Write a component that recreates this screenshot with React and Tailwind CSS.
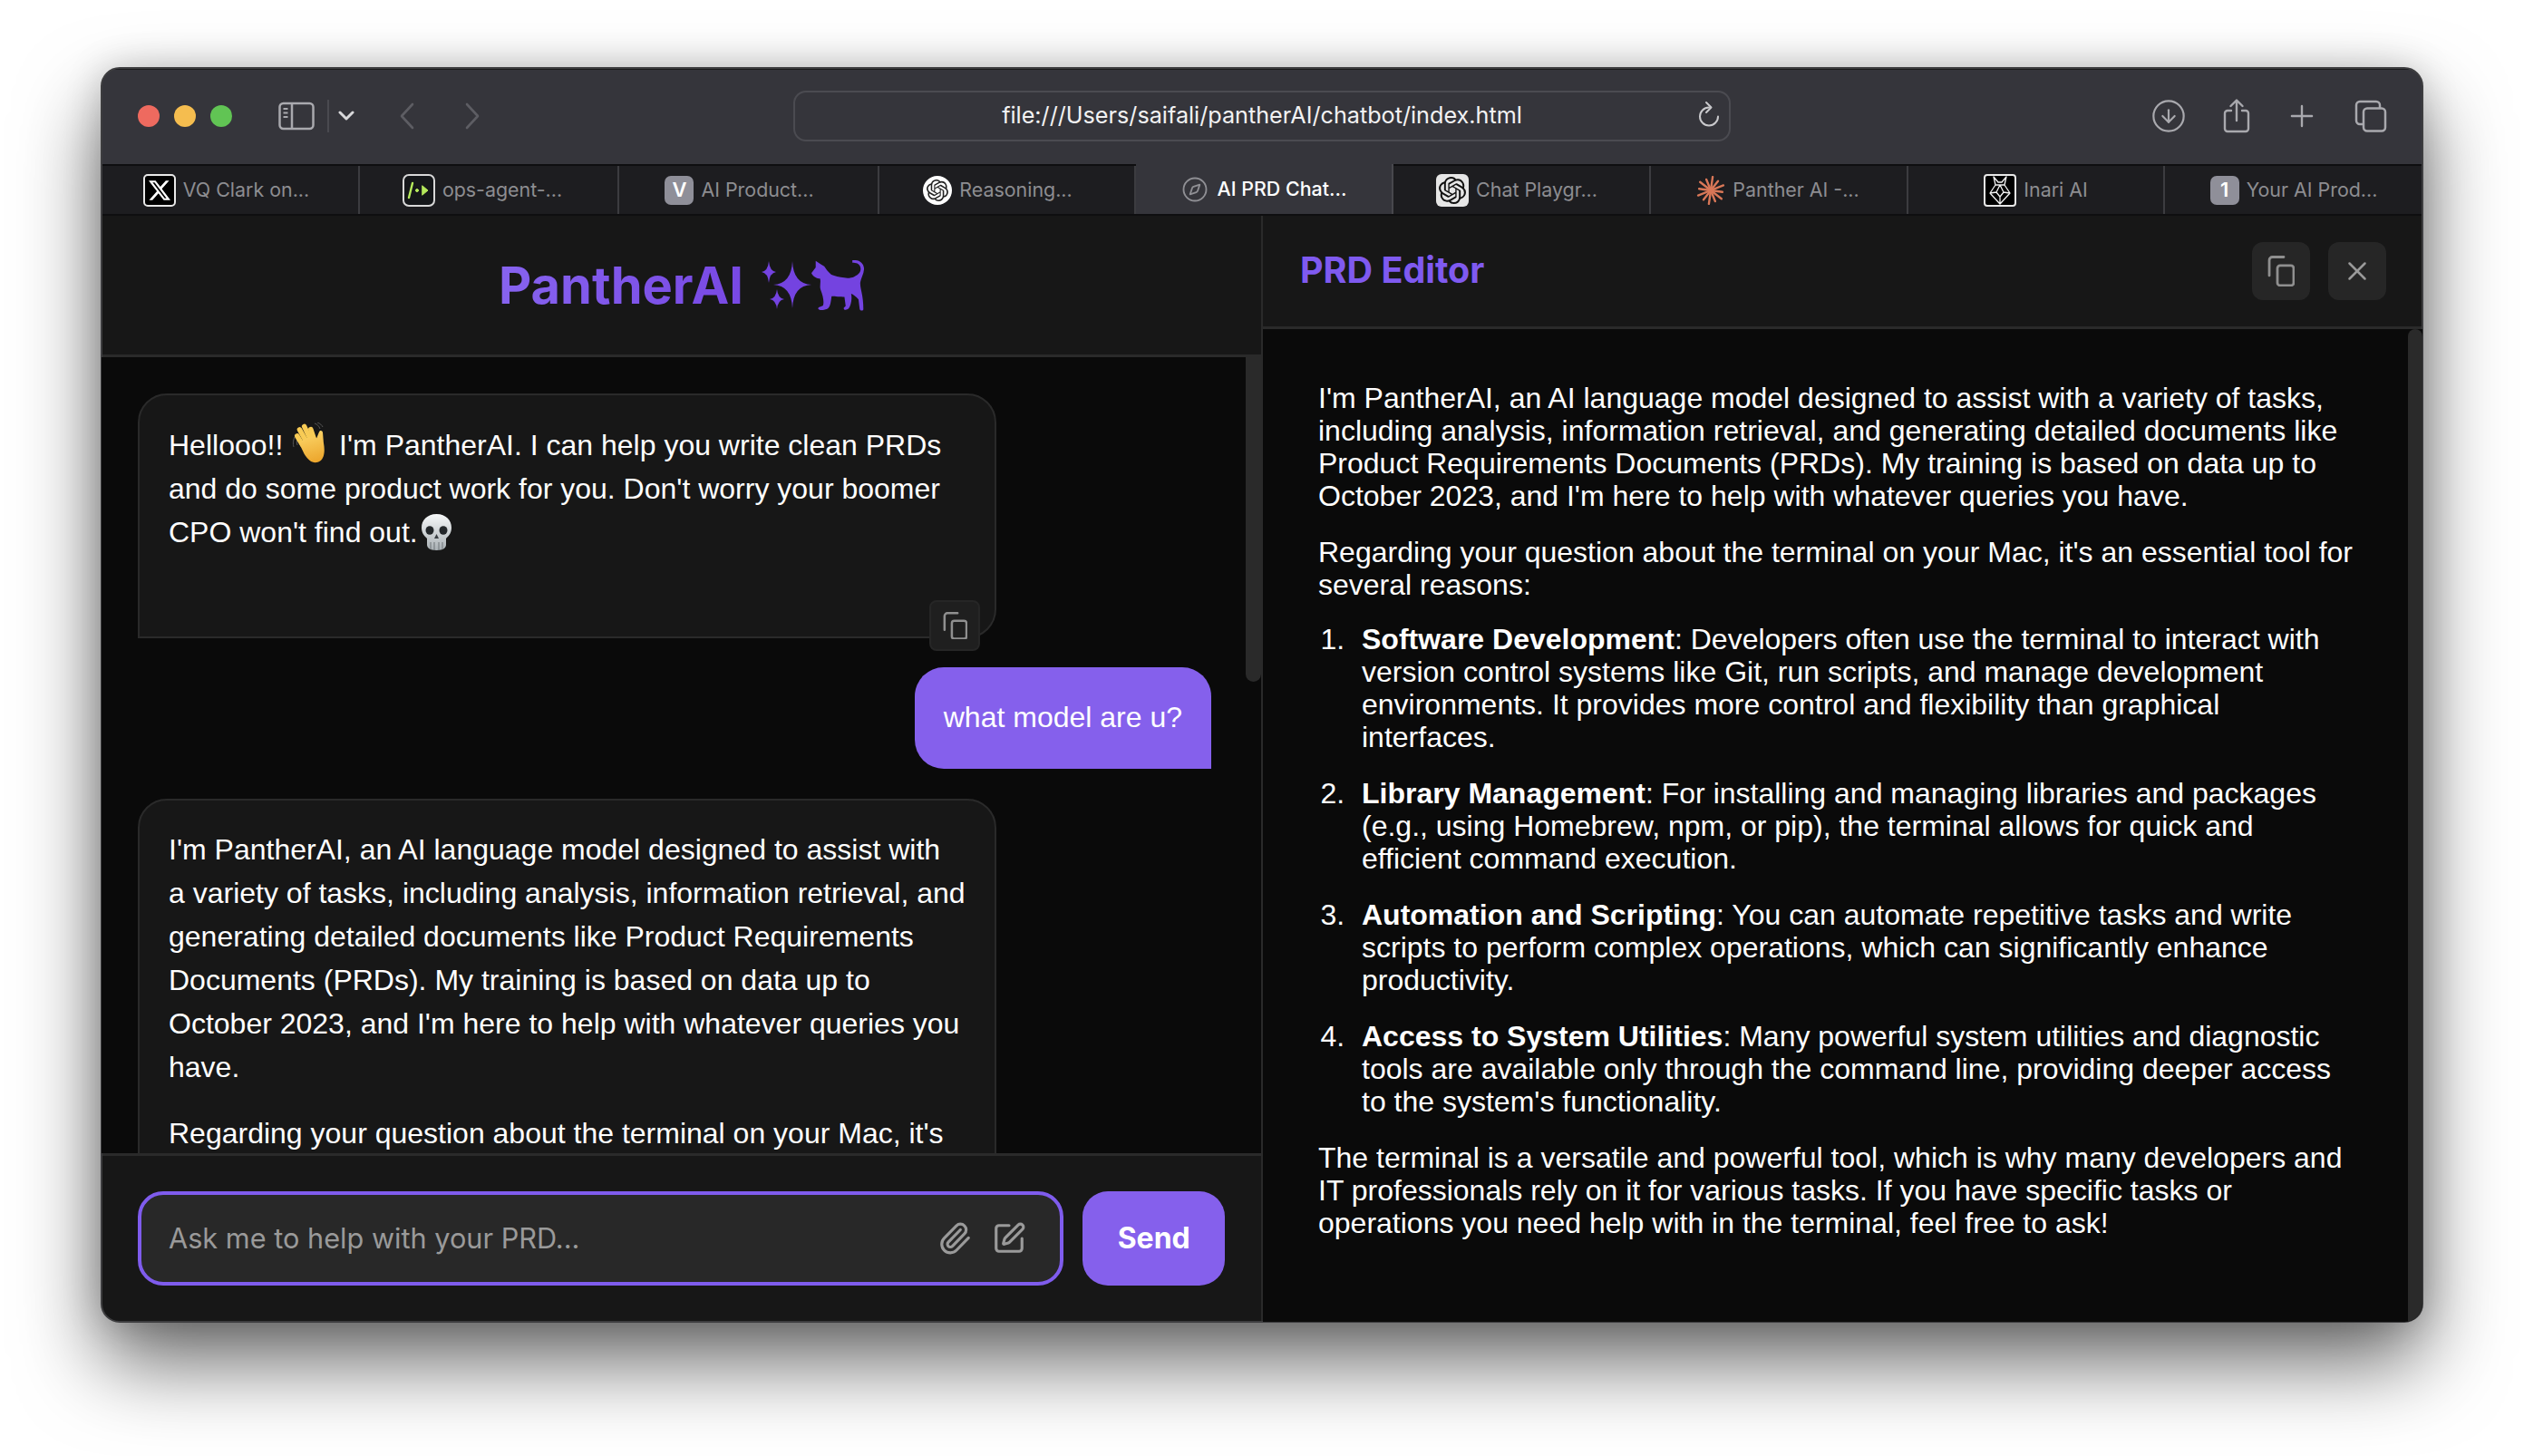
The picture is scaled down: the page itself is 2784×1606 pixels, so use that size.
import { Compass, Paperclip, SquarePen, X, CircleArrowDown, Plus } from 'lucide-react'
import { SiOpenai, SiX } from 'react-icons/si'

const sans = "font-['Liberation_Sans',Arial,sans-serif]"

function Star({ cx, cy, h, v }) {
  return <path d={`M${cx} ${cy - v}Q${cx + 1} ${cy - 1} ${cx + h} ${cy}Q${cx + 1} ${cy + 1} ${cx} ${cy + v}Q${cx - 1} ${cy + 1} ${cx - h} ${cy}Q${cx - 1} ${cy - 1} ${cx} ${cy - v}Z`} />
}

function Sparkles() {
  return (
    <svg width="55" height="54" viewBox="0 0 55 54" fill="#7443e0">
      <Star cx={34} cy={26} h={21} v={26} />
      <Star cx={8} cy={12} h={8} v={12} />
      <Star cx={17} cy={42} h={8} v={11} />
    </svg>
  )
}

function Cat() {
  return (
    <svg width="58" height="56" viewBox="0 0 172 166" fill="#7443e0">
      <path d="M0 42 L14 24 L14 2 L32 14 L42 20 C52 34 60 46 72 50 C98 58 124 62 140 54 C156 46 164 36 160 22 C156 10 146 8 134 8 L134 0 C156 -2 170 8 172 26 C173 44 162 58 160 72 C158 92 170 112 170 160 C170 166 160 166 158 160 L154 128 C146 120 136 112 130 110 C134 130 128 150 122 158 C116 164 104 164 106 156 L112 150 L108 120 C96 118 76 120 66 118 C64 134 62 152 54 158 C44 164 22 166 22 158 C22 152 32 152 38 148 C42 136 38 116 30 96 C26 84 32 70 28 60 C18 60 6 54 0 42Z" />
    </svg>
  )
}

function WaveEmoji() {
  return (
    <svg width="42" height="46" viewBox="0 0 42 46" className="inline-block align-[-10px] mx-[1px]">
      <defs><linearGradient id="wv" x1="0" y1="0" x2="0" y2="1"><stop offset="0" stopColor="#fad163" /><stop offset="1" stopColor="#eca52b" /></linearGradient></defs>
      <g stroke="#666" strokeWidth="1" fill="none" opacity="0.8"><path d="M3 16c-2 4-2 8-1 11M7 17c-2 3-2 5-1 8" /><path d="M25 1c3 1 5 3 6 6M28 0c3 1 5 3 6 5" /></g>
      <g transform="rotate(-16 22 28)">
        <g strokeWidth="5.500" strokeLinecap="round" fill="none" stroke="#f8cb55">
          <path d="M13 22L10 11" />
          <path d="M18 20L14.500 5" />
          <path d="M23 19L20.500 3" />
          <path d="M27 20L26.500 8" />
        </g>
        <path d="M10 20C16 15 26 15 30 19L34 14C36 11 39 13 38 16L36 26C35 37 31 45 24 45C17 45 14 39 12 32Z" fill="url(#wv)" />
      </g>
    </svg>
  )
}

function SkullEmoji() {
  return (
    <svg width="37" height="40" viewBox="0 0 37 40" className="inline-block align-[-9px] ml-[2px]">
      <defs><linearGradient id="sk" x1="0" y1="0" x2="0" y2="1"><stop offset="0" stopColor="#f6f8f9" /><stop offset="1" stopColor="#a9b0b4" /></linearGradient></defs>
      <path d="M18.5 0C8 0 2 7 2 15c0 6 3 9 6 12v7c0 3 3 6 10.500 6S29 37 29 34v-7c3-3 6-6 6-12C35 7 29 0 18.500 0z" fill="url(#sk)" />
      <ellipse cx="11" cy="18" rx="4.500" ry="4.800" fill="#23272a" />
      <ellipse cx="26" cy="18" rx="4.500" ry="4.800" fill="#23272a" />
      <path d="M18.500 22l-2.500 5h5z" fill="#3a3f43" />
      <path d="M12 31v8M16 31v9M21 31v9M25 31v8" stroke="#6e7478" strokeWidth="1" />
    </svg>
  )
}

function CopyIcon({ size = 30, color = '#8f8f8f' }) {
  return (
    <svg width={size} height={size * 1.13} viewBox="0 0 30 34" fill="none" stroke={color} strokeWidth="2.800" strokeLinejoin="round">
      <rect x="11" y="11" width="18" height="22" rx="3" />
      <path d="M2 22V5a3.500 3.500 0 0 1 3.500-3.500H18" strokeLinecap="round" />
    </svg>
  )
}

function SidebarIcon() {
  return (
    <svg width="40" height="32" viewBox="0 0 40 32" fill="none" stroke="#a9a9ae" strokeWidth="2.500">
      <rect x="1.500" y="2" width="37" height="28" rx="4" />
      <path d="M15 2v28" />
      <path d="M5.500 8h5M5.500 12.500h5M5.500 17h5" strokeWidth="1.800" />
    </svg>
  )
}

function ShareIcon() {
  return (
    <svg width="30" height="38" viewBox="0 0 30 38" fill="none" stroke="#a9a9ae" strokeWidth="2.400" strokeLinecap="round" strokeLinejoin="round">
      <path d="M9 13H5a3 3 0 0 0-3 3v17a3 3 0 0 0 3 3h20a3 3 0 0 0 3-3V16a3 3 0 0 0-3-3h-4" />
      <path d="M15 24V2M8.500 8L15 1.500 21.500 8" />
    </svg>
  )
}

function TabsIcon() {
  return (
    <svg width="36" height="36" viewBox="0 0 36 36" fill="none" stroke="#a9a9ae" strokeWidth="2.500" strokeLinejoin="round">
      <rect x="10" y="9.500" width="24" height="25" rx="4" />
      <path d="M10 27H6a4 4 0 0 1-4-4V6a4 4 0 0 1 4-4h18a4 4 0 0 1 4 4v3.500" />
    </svg>
  )
}

function ReloadIcon() {
  return (
    <svg width="24" height="30" viewBox="0 0 24 30" fill="none" stroke="#c9c9cc" strokeWidth="2" strokeLinecap="round" strokeLinejoin="round">
      <path d="M12 7.500a10 10 0 1 0 10 10" />
      <path d="M9 2l5.500 5.500L9 13" />
    </svg>
  )
}

function FoxIcon() {
  return (
    <svg width="26" height="32" viewBox="0 0 26 32" fill="none" stroke="#f2f2f2" strokeWidth="1.300" strokeLinejoin="round">
      <path d="M6 1l2 9h10l2-9-5 6h-4zM8 10l-6 9 11 12 11-12-6-9M2 19l7-1 4 5 4-5 7 1M13 23v8M9 18l4-8 4 8" />
    </svg>
  )
}

function OpsIcon() {
  return (
    <svg width="26" height="20" viewBox="0 0 26 20" fill="none" stroke="#b6ea5c" strokeWidth="2.400" strokeLinecap="round">
      <path d="M6 2L2 18" />
      <circle cx="11" cy="10" r="1.500" fill="#b6ea5c" strokeWidth="1" />
      <path d="M17 5l6 5-6 5z" fill="#b6ea5c" strokeWidth="1" strokeLinejoin="round" />
    </svg>
  )
}

function Starburst() {
  const spokes = [0, 30, 60, 90, 120, 150, 180, 210, 240, 270, 300, 330]
  return (
    <svg width="32" height="32" viewBox="0 0 32 32" stroke="#d97757" strokeWidth="2.400" strokeLinecap="round">
      {spokes.map(a => <line key={a} x1="16" y1="16" x2="16" y2={a % 60 === 0 ? 1 : 3} transform={`rotate(${a + 8} 16 16)`} />)}
    </svg>
  )
}

const tabs = [
  { title: 'VQ Clark on...', w: 'w-[285px] pr-[8px]', icon: <span className="w-[36px] h-[36px] rounded-[5px] bg-black border-2 border-[#e8e8e8] flex items-center justify-center"><SiX size={24} color="#fff" /></span> },
  { title: 'ops-agent-...', w: 'w-[286px] pr-[14px]', icon: <span className="w-[36px] h-[36px] rounded-[7px] bg-[#15171a] border-2 border-[#d8d8d8] flex items-center justify-center"><OpsIcon /></span> },
  { title: 'AI Product...', w: 'w-[287px] pr-[20px]', icon: <span className="w-[32px] h-[32px] rounded-[7px] bg-[#8f8f99] flex items-center justify-center text-white text-[22px] font-semibold">V</span> },
  { title: 'Reasoning...', w: 'w-[283px] pr-[20px]', icon: <span className="w-[32px] h-[32px] rounded-full bg-white flex items-center justify-center"><SiOpenai size={24} color="#222" /></span> },
  { title: 'AI PRD Chat...', w: 'w-[284px]', active: true, icon: <Compass size={30} color="#8f8f94" strokeWidth={1.500} /> },
  { title: 'Chat Playgr...', w: 'w-[284px] pr-[10px]', icon: <span className="w-[36px] h-[36px] rounded-[6px] bg-[#e6e6e6] flex items-center justify-center"><SiOpenai size={30} color="#111" /></span> },
  { title: 'Panther AI -...', w: 'w-[284px] pr-[2px]', icon: <Starburst /> },
  { title: 'Inari AI', w: 'w-[283px]', icon: <span className="w-[36px] h-[36px] rounded-[4px] bg-black border-2 border-[#e8e8e8] flex items-center justify-center"><FoxIcon /></span> },
  { title: 'Your AI Prod...', w: 'w-[284px]', icon: <span className="w-[32px] h-[32px] rounded-[7px] bg-[#8f8f99] flex items-center justify-center text-white text-[22px] font-semibold">1</span> },
]

const listItems = [
  ['Software Development', ': Developers often use the terminal to interact with version control systems like Git, run scripts, and manage development environments. It provides more control and flexibility than graphical interfaces.'],
  ['Library Management', ': For installing and managing libraries and packages (e.g., using Homebrew, npm, or pip), the terminal allows for quick and efficient command execution.'],
  ['Automation and Scripting', ': You can automate repetitive tasks and write scripts to perform complex operations, which can significantly enhance productivity.'],
  ['Access to System Utilities', ': Many powerful system utilities and diagnostic tools are available only through the command line, providing deeper access to the system\'s functionality.'],
]

export default function App() {
  return (
    <div className="w-[2784px] h-[1606px] bg-white pt-[75px] pl-[112px] overflow-hidden font-[Inter,sans-serif]">
      <div className="w-[2560px] h-[1383px] rounded-[20px] overflow-hidden flex flex-col bg-[#171717] outline-2 outline-[#3d3d3f] -outline-offset-1 shadow-[0_44px_90px_rgba(0,0,0,0.6),0_0_40px_rgba(0,0,0,0.18)]">
        {/* toolbar */}
        <div className="h-[106px] shrink-0 bg-[#35353b] border-t-2 border-[#1a1a1c] flex items-start pt-[23px] pl-[40px]">
          <div className="flex items-center h-[56px] w-full">
            <span className="w-[24px] h-[24px] rounded-full bg-[#ee6a5f]" />
            <span className="w-[24px] h-[24px] rounded-full bg-[#f5bd4f] ml-[16px]" />
            <span className="w-[24px] h-[24px] rounded-full bg-[#61c454] ml-[16px]" />
            <span className="ml-[51px]"><SidebarIcon /></span>
            <span className="ml-[14px] w-[2px] h-[36px] bg-[#4a4a50]" />
            <svg className="ml-[9px]" width="20" height="12" viewBox="0 0 20 12" fill="none" stroke="#d8d8da" strokeWidth="3" strokeLinecap="round" strokeLinejoin="round"><path d="M3 2l7 7 7-7" /></svg>
            <svg className="ml-[49px]" width="16" height="30" viewBox="0 0 16 30" fill="none" stroke="#5d5d63" strokeWidth="2.600" strokeLinecap="round" strokeLinejoin="round"><path d="M14 2L2 15l12 13" /></svg>
            <svg className="ml-[56px]" width="16" height="30" viewBox="0 0 16 30" fill="none" stroke="#5d5d63" strokeWidth="2.600" strokeLinecap="round" strokeLinejoin="round"><path d="M2 2l12 13L2 28" /></svg>
            <div className="ml-[346px] w-[1034px] h-[56px] rounded-[14px] border-2 border-[#4b4b51] relative flex items-center justify-center text-[#f2f2f3] text-[25.2px]">
              file:///Users/saifali/pantherAI/chatbot/index.html
              <span className="absolute right-[10px] top-[9px]"><ReloadIcon /></span>
            </div>
            <CircleArrowDown className="ml-[463px]" size={40} color="#a9a9ae" strokeWidth={1.300} />
            <span className="ml-[40px]"><ShareIcon /></span>
            <Plus className="ml-[38px]" size={38} color="#a9a9ae" strokeWidth={1.500} />
            <span className="ml-[39px]"><TabsIcon /></span>
          </div>
        </div>
        {/* tab strip */}
        <div className="h-[57px] shrink-0 flex bg-[#1d1d20] border-y-2 border-[#0e0e10]">
          {tabs.map((t, i) => (
            <div key={t.title} className={`${t.w} shrink-0 flex items-center justify-center gap-[8px] text-[21.4px] ${i < 8 ? 'border-r-2' : ''} ${t.active ? '-mt-[2px] bg-[#35353b] text-white font-medium gap-[10px] border-[#48484d]' : 'text-[#8d8d91] border-[#3c3c40]'}`}>
              {t.icon}
              <span>{t.title}</span>
            </div>
          ))}
        </div>
        {/* content */}
        <div className="flex-1 flex min-h-0">
          {/* chat column */}
          <div className="w-[1281px] shrink-0 flex flex-col border-r-2 border-[#2a2a2a]">
            <div className="h-[156px] shrink-0 flex items-center justify-center gap-[20px] border-b-[3px] border-[#2a2a2a]">
              <h1 className="text-[56px] font-bold bg-gradient-to-r from-[#8763ef] to-[#7848e4] bg-clip-text text-transparent leading-none">PantherAI</h1>
              <div className="flex items-center">
                <Sparkles />
                <Cat />
              </div>
            </div>
            <div className={`flex-1 min-h-0 relative bg-[#0a0a0a] overflow-hidden pt-[40px] pl-[40px] pr-[55px] flex flex-col text-[32px] text-white ${sans}`}>
              <div className="w-[947px] h-[270px] shrink-0 relative rounded-[32px] rounded-bl-none bg-[#171717] border-2 border-[#2a2a2a] px-[32px] pt-[30px] leading-[48px]">
                <p>Hellooo!! <WaveEmoji /> I'm PantherAI. I can help you write clean PRDs and do some product work for you. Don't worry your boomer CPO won't find out.<SkullEmoji /></p>
                <button className="absolute right-[16px] -bottom-[16px] w-[56px] h-[56px] rounded-[8px] bg-[#1f1f1f] border-2 border-[#262626] flex items-center justify-center"><CopyIcon size={27} /></button>
              </div>
              <div className="mt-[32px] self-end shrink-0 rounded-[32px] rounded-br-none bg-[#8560ec] px-[32px] pt-[31px] pb-[33px] leading-[48px]">what model are u?</div>
              <div className="mt-[33px] w-[947px] shrink-0 rounded-[32px] rounded-bl-none bg-[#171717] border-2 border-[#2a2a2a] pl-[32px] pr-[28px] pt-[30px] pb-[32px] leading-[48px]">
                <p className="mb-[25px]">I'm PantherAI, an AI language model designed to assist with<br />a variety of tasks, including analysis, information retrieval, and generating detailed documents like Product Requirements Documents (PRDs). My training is based on data up to October 2023, and I'm here to help with whatever queries you have.</p>
                <p>Regarding your question about the terminal on your Mac, it's an essential tool for several reasons:</p>
              </div>
              <div className="absolute top-0 right-0 w-[17px] h-[358px] rounded-b-full bg-[#2a2a2a]" />
            </div>
            <div className="h-[186px] shrink-0 border-t-[3px] border-[#2a2a2a] px-[40px] pt-[39px] flex gap-[21px]">
              <div className="w-[1024px] h-[104px] rounded-[28px] border-4 border-[#7f5ced] bg-[#282828] flex items-center pl-[30px] pr-[37px] text-[30.7px] text-[#9a9a9a]">
                <span className="flex-1">Ask me to help with your PRD...</span>
                <Paperclip size={38} color="#9a9a9a" strokeWidth={2} />
                <SquarePen className="ml-[22px]" size={38} color="#9a9a9a" strokeWidth={2} />
              </div>
              <button className="w-[157px] h-[104px] rounded-[28px] bg-[#8560ec] text-white text-[32px] font-bold">Send</button>
            </div>
          </div>
          {/* editor column */}
          <div className="flex-1 min-w-0 flex flex-col">
            <div className="h-[125px] shrink-0 border-b-[3px] border-[#2a2a2a] flex items-center justify-between pl-[41px] pr-[40px]">
              <h2 className="text-[39.500px] font-bold text-[#7f5af0]">PRD Editor</h2>
              <div className="flex gap-[20px]">
                <button className="w-[64px] h-[64px] rounded-[12px] bg-[#262626] flex items-center justify-center"><CopyIcon size={30} /></button>
                <button className="w-[64px] h-[64px] rounded-[12px] bg-[#262626] flex items-center justify-center"><X size={34} color="#9a9a9a" strokeWidth={1.800} /></button>
              </div>
            </div>
            <div className={`flex-1 min-h-0 relative bg-[#0a0a0a] pt-[58px] pl-[61px] pr-[73px] text-[32px] leading-[36px] text-white ${sans}`}>
              <p className="mb-[26px]">I'm PantherAI, an AI language model designed to assist with a variety of tasks, including analysis, information retrieval, and generating detailed documents like Product Requirements Documents (PRDs). My training is based on data up to October 2023, and I'm here to help with whatever queries you have.</p>
              <p className="mb-[24px]">Regarding your question about the terminal on your Mac, it's an essential tool for several reasons:</p>
              <ol className="list-decimal pl-[38px] mb-[26px]">
                {listItems.map(([head, rest]) => (
                  <li key={head} className="mb-[26px] pl-[10px]"><strong className="font-bold">{head}</strong>{rest}</li>
                ))}
              </ol>
              <p>The terminal is a versatile and powerful tool, which is why many developers and IT professionals rely on it for various tasks. If you have specific tasks or operations you need help with in the terminal, feel free to ask!</p>
              <div className="absolute top-0 right-0 bottom-0 w-[16px] rounded-t-full bg-[#2a2a2a]" />
            </div>
          </div>
        </div>
      </div>
    </div>
  )
}
